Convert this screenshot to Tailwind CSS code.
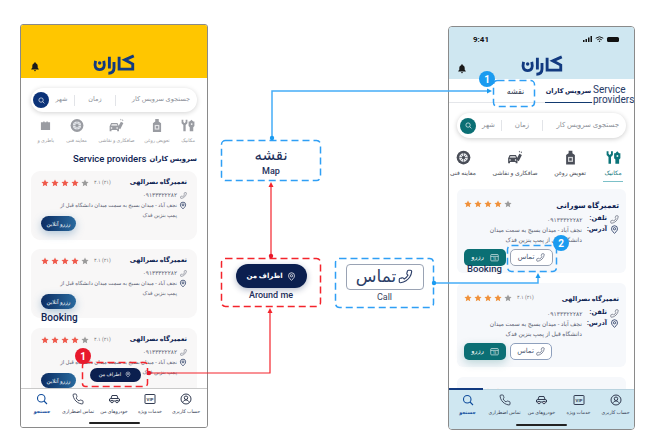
<!DOCTYPE html>
<html lang="fa">
<head>
<meta charset="utf-8">
<script src="https://cdn.jsdelivr.net/npm/@tailwindcss/browser@4"></script>
</head>
<body class="bg-white">
<svg class="hidden" width="0" height="0">
  <defs>
    <symbol id="phone" viewBox="0 0 24 24"><path fill="none" stroke="currentColor" stroke-width="1.8" d="M22 16.92v3a2 2 0 0 1-2.18 2 19.79 19.79 0 0 1-8.63-3.07 19.5 19.5 0 0 1-6-6 19.79 19.79 0 0 1-3.07-8.67A2 2 0 0 1 4.11 2h3a2 2 0 0 1 2 1.72 12.84 12.84 0 0 0 .7 2.81 2 2 0 0 1-.45 2.11L8.09 9.91a16 16 0 0 0 6 6l1.27-1.27a2 2 0 0 1 2.11-.45 12.84 12.84 0 0 0 2.81.7A2 2 0 0 1 22 16.92z"/></symbol>
    <symbol id="pin" viewBox="0 0 24 24"><path fill="none" stroke="currentColor" stroke-width="2" d="M20 10c0 6-8 12-8 12s-8-6-8-12a8 8 0 0 1 16 0Z"/><circle cx="12" cy="10" r="3" fill="none" stroke="currentColor" stroke-width="2"/></symbol>
    <symbol id="star" viewBox="0 0 24 24"><path fill="currentColor" d="M12 1.5l3.2 6.9 7.5.9-5.5 5.2 1.4 7.5-6.6-3.7-6.6 3.7 1.4-7.5-5.5-5.2 7.5-.9z"/></symbol>
    <symbol id="bell" viewBox="0 0 24 24"><path fill="currentColor" d="M12 2a2 2 0 0 1 2 2c3 1 4.500 3.500 4.500 7v4l2.500 3v1H3v-1l2.500-3v-4c0-3.500 1.500-6 4.500-7a2 2 0 0 1 2-2zM9.500 21h5a2.500 2.500 0 0 1-5 0z"/></symbol>
    <symbol id="search" viewBox="0 0 24 24"><circle cx="10.500" cy="10.500" r="7.500" fill="none" stroke="currentColor" stroke-width="2.200"/><path d="M16 16l6 6" stroke="currentColor" stroke-width="2.200"/></symbol>
    <symbol id="logo" viewBox="0 0 41 20"><g fill="none" stroke="currentColor" stroke-width="2.800"><path d="M39.800 1.600L31 5.500L38.800 9.600V14.500H25.500V2.500"/><path d="M20.500 7.500V13.500Q20.500 18.500 15 18.500"/><path d="M16 2.500V14"/><path d="M2.500 6.500Q0.500 15 6.500 15Q12.500 15 10.500 6.500"/></g><circle cx="6.500" cy="8.500" r="1.700" fill="currentColor"/></symbol>
    <symbol id="mech" viewBox="0 0 24 24"><path fill="currentColor" d="M1 2h3v4l2 2 2-2V2h3v6l-3 3v11H4V11L1 8zM15 5l3-3 3 3h2v8l-2 2v7h-6v-7l-2-2V5z"/><path fill="#fff" opacity=".8" d="M17 8h2.500v3H17z"/></symbol>
    <symbol id="oil" viewBox="0 0 24 24"><path fill="currentColor" d="M9 1h6v4l4 3v15H5V8l4-3z"/><rect x="8" y="11" width="8" height="8" fill="#fff" opacity=".75"/><rect x="10" y="13" width="4" height="4" fill="currentColor"/></symbol>
    <symbol id="paint" viewBox="0 0 24 24"><path fill="currentColor" d="M1 13l2.500-5h10l2.500 5v8h-3v-2H4v2H1z"/><path d="M4.500 9.500h8l1 3h-10z" fill="#fff" opacity=".7"/><circle cx="4" cy="16" r="1.300" fill="#fff"/><circle cx="13" cy="16" r="1.300" fill="#fff"/><path fill="currentColor" d="M14 15l5-9 4 2-5 10zM19 1l1 2-1 1-1-2zM22 2l1 2-1 1-1-2z"/></symbol>
    <symbol id="tire" viewBox="0 0 24 24"><circle cx="12" cy="12" r="11" fill="currentColor"/><circle cx="12" cy="12" r="7" fill="#e5e7eb"/><circle cx="12" cy="12" r="2.500" fill="currentColor"/><path d="M12 5v14M5 12h14M7 7l10 10M17 7L7 17" stroke="currentColor" stroke-width="1"/></symbol>
    <symbol id="batt" viewBox="0 0 24 24"><path fill="currentColor" d="M2 5h5V3h3v2h4V3h3v2h5v17H2z"/></symbol>
    <symbol id="car" viewBox="0 0 24 24"><path fill="none" stroke="currentColor" stroke-width="2" d="M2 16v-4l3-1 2-6h10l2 6 3 1v4z"/><path stroke="currentColor" stroke-width="2" d="M5 11h14"/><circle cx="7" cy="17" r="2.500" fill="#fff" stroke="currentColor" stroke-width="2"/><circle cx="17" cy="17" r="2.500" fill="#fff" stroke="currentColor" stroke-width="2"/></symbol>
    <symbol id="user" viewBox="0 0 24 24"><circle cx="12" cy="12" r="10" fill="none" stroke="currentColor" stroke-width="2"/><circle cx="12" cy="9.500" r="3.500" fill="none" stroke="currentColor" stroke-width="2"/><path d="M5.500 19c1-3.500 3.500-5 6.500-5s5.500 1.500 6.500 5" fill="none" stroke="currentColor" stroke-width="2"/></symbol>
    <symbol id="vip" viewBox="0 0 24 24"><rect x="2" y="3" width="20" height="18" rx="1" fill="none" stroke="currentColor" stroke-width="2"/><text x="12" y="15.500" text-anchor="middle" font-size="8.500" font-weight="700" font-family="Roboto" fill="currentColor">VIP</text></symbol>
    <symbol id="cal" viewBox="0 0 24 24"><rect x="2" y="4" width="20" height="17" rx="2" fill="none" stroke="currentColor" stroke-width="1.600"/><path d="M2 9h20" stroke="currentColor" stroke-width="1.600"/><text x="12" y="18" text-anchor="middle" font-size="7" font-family="Roboto" fill="currentColor">15</text></symbol>
  </defs>
</svg>

<main class="relative w-[669px] h-[446px] overflow-hidden bg-white text-[#0e2352] font-['Roboto','DejaVu_Sans',sans-serif]">

  <!-- left phone -->
  <section class="absolute left-[20px] top-[24px] w-[188px] h-[404px] flex flex-col overflow-hidden border border-[#8a8a8a] rounded-[3px] bg-white">
    <header class="relative h-[53px] shrink-0 bg-[#ffc600] flex items-end justify-center pb-[3px]">
      <svg class="w-[42px] h-[21px] text-[#123a80]"><use href="#logo"/></svg>
      <svg class="absolute left-[9px] top-[36px] w-[10px] h-[11px] text-[#1a1a1a]"><use href="#bell"/></svg>
    </header>
    <div class="flex-1 min-h-0 overflow-hidden px-[10px] pt-[10px]">
      <div dir="rtl" class="h-[24px] rounded-full bg-white shadow-[0_1px_5px_rgba(0,0,0,0.18)] flex items-center pr-[7px] pl-[2px] text-[6.500px] text-[#8b8f98]">
        <span class="w-[74px]">جستجوی سرویس کار</span>
        <span class="w-px h-[11px] bg-[#e2e4e8]"></span>
        <span class="w-[40px] text-center">زمان</span>
        <span class="w-px h-[11px] bg-[#e2e4e8]"></span>
        <span class="flex-1 text-center">شهر</span>
        <span class="w-[16px] h-[16px] rounded-full bg-[#0b3278] flex items-center justify-center text-white"><svg class="w-[7px] h-[7px]"><use href="#search"/></svg></span>
      </div>
      <div dir="rtl" class="mt-[6px] -mr-[6px] flex text-[#9a9ca2] text-[4.800px] text-center">
        <div class="w-[32px] flex flex-col items-center gap-[4px]"><svg class="w-[14px] h-[15px]"><use href="#mech"/></svg><span>مکانیک</span></div>
        <div class="w-[35px] flex flex-col items-center gap-[4px]"><svg class="w-[14px] h-[15px]"><use href="#oil"/></svg><span>تعویض روغن</span></div>
        <div class="w-[52px] flex flex-col items-center gap-[4px]"><svg class="w-[15px] h-[15px]"><use href="#paint"/></svg><span>صافکاری و نقاشی</span></div>
        <div class="w-[34px] flex flex-col items-center gap-[4px]"><svg class="w-[14px] h-[15px]"><use href="#tire"/></svg><span>معاینه فنی</span></div>
        <div class="w-[32px] flex flex-col items-center gap-[4px]"><svg class="w-[11px] h-[15px]"><use href="#batt"/></svg><span>باطری و</span></div>
      </div>
      <div dir="rtl" class="mt-[9px] flex items-center gap-[3px] h-[11px]">
        <span class="text-[6.800px] font-bold">سرویس کاران</span>
        <span dir="ltr" class="text-[9.500px] font-medium">Service providers</span>
      </div>

      <article dir="rtl" class="mt-[7px] h-[69px] rounded-[9px] bg-[#f8f7f7] pt-[6px] pr-[10px] pl-[10px] text-[5.800px] text-[#5a6072]">
        <div class="flex justify-between items-center h-[12px]">
          <b class="text-[6.500px] text-[#0e2352]">تعمیرگاه نصرالهی</b>
          <span dir="ltr" class="flex items-center gap-[2px]"><svg class="w-[8px] h-[8px] text-[#ef5a4c]"><use href="#star"/></svg><svg class="w-[8px] h-[8px] text-[#ef5a4c]"><use href="#star"/></svg><svg class="w-[8px] h-[8px] text-[#ef5a4c]"><use href="#star"/></svg><svg class="w-[8px] h-[8px] text-[#ef5a4c]"><use href="#star"/></svg><svg class="w-[8px] h-[8px] text-[#9b9b9b]"><use href="#star"/></svg><span class="ml-[3px] text-[5px] text-[#777]">۴.۱ (۲۱)</span></span>
        </div>
        <div class="mt-[1px] flex items-center gap-[3px] h-[11px]"><svg class="w-[7px] h-[7px] -scale-x-100"><use href="#phone"/></svg><span>۰۹۱۳۳۳۲۲۲۸۲</span></div>
        <div class="flex gap-[2px]"><svg class="w-[8px] h-[9px] shrink-0 text-[#0e2352]"><use href="#pin"/></svg><p class="leading-[9.500px] w-[128px] text-[5.400px]">نجف آباد - میدان بسیج به سمت میدان دانشگاه قبل از پمپ بنزین فدک</p></div>
        <div class="-mt-[4px] flex justify-end"><span class="w-[35px] h-[15px] rounded-full bg-gradient-to-r from-[#0d2d63] to-[#2a6a9e] text-white text-[5.500px] flex items-center justify-center shadow-[0_3px_8px_rgba(42,106,158,0.35)]">رزرو آنلاین</span></div>
      </article>

      <article dir="rtl" class="mt-[9px] h-[69px] rounded-[9px] bg-[#f8f7f7] pt-[6px] pr-[10px] pl-[10px] text-[5.800px] text-[#5a6072]">
        <div class="flex justify-between items-center h-[12px]">
          <b class="text-[6.500px] text-[#0e2352]">تعمیرگاه نصرالهی</b>
          <span dir="ltr" class="flex items-center gap-[2px]"><svg class="w-[8px] h-[8px] text-[#ef5a4c]"><use href="#star"/></svg><svg class="w-[8px] h-[8px] text-[#ef5a4c]"><use href="#star"/></svg><svg class="w-[8px] h-[8px] text-[#ef5a4c]"><use href="#star"/></svg><svg class="w-[8px] h-[8px] text-[#ef5a4c]"><use href="#star"/></svg><svg class="w-[8px] h-[8px] text-[#9b9b9b]"><use href="#star"/></svg><span class="ml-[3px] text-[5px] text-[#777]">۴.۱ (۲۱)</span></span>
        </div>
        <div class="mt-[1px] flex items-center gap-[3px] h-[11px]"><svg class="w-[7px] h-[7px] -scale-x-100"><use href="#phone"/></svg><span>۰۹۱۳۳۳۲۲۲۸۲</span></div>
        <div class="flex gap-[2px]"><svg class="w-[8px] h-[9px] shrink-0 text-[#0e2352]"><use href="#pin"/></svg><p class="leading-[9.500px] w-[128px] text-[5.400px]">نجف آباد - میدان بسیج به سمت میدان دانشگاه قبل از پمپ بنزین فدک</p></div>
        <div class="-mt-[4px] flex justify-end"><span class="w-[35px] h-[15px] rounded-full bg-gradient-to-r from-[#0d2d63] to-[#2a6a9e] text-white text-[5.500px] flex items-center justify-center shadow-[0_3px_8px_rgba(42,106,158,0.35)]">رزرو آنلاین</span></div>
      </article>

      <div class="h-[10px] pl-[10px] text-[10px] leading-[10px] font-medium -translate-y-[5px]">Booking</div>

      <article dir="rtl" class="h-[69px] rounded-[9px] bg-[#f8f7f7] pt-[6px] pr-[10px] pl-[10px] text-[5.800px] text-[#5a6072]">
        <div class="flex justify-between items-center h-[12px]">
          <b class="text-[6.500px] text-[#0e2352]">تعمیرگاه نصرالهی</b>
          <span dir="ltr" class="flex items-center gap-[2px]"><svg class="w-[8px] h-[8px] text-[#ef5a4c]"><use href="#star"/></svg><svg class="w-[8px] h-[8px] text-[#ef5a4c]"><use href="#star"/></svg><svg class="w-[8px] h-[8px] text-[#ef5a4c]"><use href="#star"/></svg><svg class="w-[8px] h-[8px] text-[#ef5a4c]"><use href="#star"/></svg><svg class="w-[8px] h-[8px] text-[#9b9b9b]"><use href="#star"/></svg><span class="ml-[3px] text-[5px] text-[#777]">۴.۱ (۲۱)</span></span>
        </div>
        <div class="mt-[1px] flex items-center gap-[3px] h-[11px]"><svg class="w-[7px] h-[7px] -scale-x-100"><use href="#phone"/></svg><span>۰۹۱۳۳۳۲۲۲۸۲</span></div>
        <div class="flex gap-[2px]"><svg class="w-[8px] h-[9px] shrink-0 text-[#0e2352]"><use href="#pin"/></svg><p class="leading-[9.500px] w-[128px] text-[5.400px]">نجف آباد - میدان بسیج به سمت میدان دانشگاه قبل از پمپ بنزین فدک</p></div>
        <div class="-mt-[4px] flex justify-end"><span class="w-[35px] h-[15px] rounded-full bg-gradient-to-r from-[#0d2d63] to-[#2a6a9e] text-white text-[5.500px] flex items-center justify-center">رزرو آنلاین</span></div>
      </article>
    </div>
    <nav dir="rtl" class="relative h-[39px] shrink-0 bg-white border-t border-[#c9c9c9] flex px-[3px] pt-[4px] text-[4.800px] text-[#333c52] text-center">
      <div class="flex-1 flex flex-col items-center gap-[3px]"><svg class="w-[12px] h-[12px]"><use href="#user"/></svg><span>حساب کاربری</span></div>
      <div class="flex-1 flex flex-col items-center gap-[3px]"><svg class="w-[12px] h-[12px]"><use href="#vip"/></svg><span>خدمات ویژه</span></div>
      <div class="flex-1 flex flex-col items-center gap-[3px]"><svg class="w-[13px] h-[12px]"><use href="#car"/></svg><span>خودروهای من</span></div>
      <div class="flex-1 flex flex-col items-center gap-[3px]"><svg class="w-[12px] h-[12px]"><use href="#phone"/></svg><span>تماس اضطراری</span></div>
      <div class="flex-1 flex flex-col items-center gap-[3px] text-[#0f4c9c]"><svg class="w-[12px] h-[12px]"><use href="#search"/></svg><b>جستجو</b></div>
      <span class="absolute bottom-[3px] left-[68px] w-[51px] h-[2px] rounded-full bg-[#222]"></span>
    </nav>
  </section>

  <!-- right phone -->
  <section class="absolute left-[448px] top-[26px] w-[187px] h-[404px] flex flex-col overflow-hidden border border-[#8a8a8a] rounded-[4px] bg-white">
    <header class="relative h-[52px] shrink-0 bg-[#cfe7f1] flex items-end justify-center pb-[3px]">
      <b class="absolute left-[24px] top-[7px] text-[8px] text-[#111]">9:41</b>
      <div class="absolute right-[15px] top-[9px] flex items-center gap-[3px] text-[#111]">
        <svg class="w-[9px] h-[6px]" viewBox="0 0 9 6"><path fill="currentColor" d="M0 4h1.500v2H0zM2.500 3H4v3H2.500zM5 1.500h1.500V6H5zM7.500 0H9v6H7.500z"/></svg>
        <svg class="w-[9px] h-[6px]" viewBox="0 0 12 8"><path fill="none" stroke="currentColor" stroke-width="1.300" d="M1 3q5-4 10 0M3 5q3-2.500 6 0"/><circle cx="6" cy="7" r="1" fill="currentColor"/></svg>
        <span class="w-[12px] h-[5px] rounded-[1.500px] bg-[#111]"></span>
      </div>
      <svg class="w-[42px] h-[21px] text-[#123a80]"><use href="#logo"/></svg>
      <svg class="absolute left-[8px] top-[36px] w-[10px] h-[11px] text-[#1a1a1a]"><use href="#bell"/></svg>
    </header>
    <div dir="rtl" class="h-[24px] shrink-0 border-b border-[#e4e6ea] flex items-start text-[#0e2352]">
      <span dir="ltr" class="w-[41px] shrink-0 text-[10px] leading-[10px] text-[#263a66] pt-[6px] text-left whitespace-nowrap">Service<br>providers</span>
      <div class="w-[47px] shrink-0 h-[24px] border-b-[1.500px] border-[#123a70] text-[6.500px] font-bold text-center pt-[8px] mr-[1px] whitespace-nowrap">سرویس کاران</div>
      <div class="w-[59px] shrink-0 text-[8px] text-center pt-[7px] text-[#333c52]">نقشه</div>
    </div>
    <div class="flex-1 min-h-0 overflow-hidden px-[8px] pt-[10px]">
      <div dir="rtl" class="h-[25px] rounded-full bg-white shadow-[0_1px_5px_rgba(0,0,0,0.2)] flex items-center pr-[7px] pl-[3px] text-[7px] text-[#8b8f98]">
        <span class="w-[76px]">جستجوی سرویس کار</span>
        <span class="w-px h-[11px] bg-[#e2e4e8]"></span>
        <span class="w-[40px] text-center">زمان</span>
        <span class="w-px h-[11px] bg-[#e2e4e8]"></span>
        <span class="flex-1 text-center">شهر</span>
        <span class="w-[16px] h-[16px] rounded-full bg-[#0b6f74] flex items-center justify-center text-white"><svg class="w-[7px] h-[7px]"><use href="#search"/></svg></span>
      </div>
    </div>
    <div class="absolute left-0 right-0 top-[123px] overflow-hidden">
      <div dir="rtl" class="flex text-[#4a4e58] text-[6px] text-center pr-[2px] h-[32px]">
        <div class="relative w-[38px] shrink-0 flex flex-col items-center gap-[3px] text-[#0b7479]"><svg class="w-[15px] h-[15px]"><use href="#mech"/></svg><span>مکانیک</span><span class="absolute bottom-0 w-[20px] h-px bg-[#7cc0c8]"></span></div>
        <div class="w-[48px] shrink-0 flex flex-col items-center gap-[3px]"><svg class="w-[15px] h-[15px]"><use href="#oil"/></svg><span>تعویض روغن</span></div>
        <div class="w-[62px] shrink-0 flex flex-col items-center gap-[3px]"><svg class="w-[16px] h-[15px]"><use href="#paint"/></svg><span>صافکاری و نقاشی</span></div>
        <div class="w-[42px] shrink-0 flex flex-col items-center gap-[3px]"><svg class="w-[15px] h-[15px]"><use href="#tire"/></svg><span class="whitespace-nowrap">معاینه فنی</span></div>
      </div>
    </div>
    <div class="absolute left-[8px] top-[162px] w-[169px] flex flex-col gap-[10px] text-[6px] text-[#5a6072]">
      <article dir="rtl" class="relative h-[84px] rounded-[6px] bg-[#f6f8fb] pt-[11px] px-[7px]">
        <div class="flex justify-between items-center h-[12px]">
          <b class="text-[7.500px] text-[#0e2352]">تعمیرگاه سورانی</b>
          <span dir="ltr" class="flex items-center gap-[2px] -mt-[5px]"><svg class="w-[8px] h-[8px] text-[#f0913a]"><use href="#star"/></svg><svg class="w-[8px] h-[8px] text-[#f0913a]"><use href="#star"/></svg><svg class="w-[8px] h-[8px] text-[#f0913a]"><use href="#star"/></svg><svg class="w-[8px] h-[8px] text-[#f0913a]"><use href="#star"/></svg><svg class="w-[8px] h-[8px] text-[#9b9b9b]"><use href="#star"/></svg></span>
        </div>
        <div class="mt-[1px] flex items-center gap-[3px] h-[12px]"><svg class="w-[9px] h-[9px] -scale-x-100"><use href="#phone"/></svg><b class="text-[6.500px] text-[#0e2352]">تلفن:</b><span class="mr-[4px]">۰۹۱۳۳۳۲۲۲۸۲</span></div>
        <div class="flex gap-[3px]"><svg class="w-[9px] h-[9px] shrink-0 text-[#0e2352]"><use href="#pin"/></svg><b class="text-[6.500px] text-[#0e2352] shrink-0">آدرس:</b><p class="leading-[9.500px] w-[108px] mr-[2px]">نجف آباد - میدان بسیج به سمت میدان دانشگاه قبل از پمپ بنزین فدک</p></div>
        <div class="absolute left-[7px] top-[60px] flex gap-[4px]" dir="ltr">
          <span dir="rtl" class="w-[42px] h-[17px] rounded-[5px] bg-[#0b6f74] text-white text-[6.500px] flex items-center justify-center gap-[6px]"><svg class="w-[9px] h-[9px]"><use href="#cal"/></svg>رزرو</span>
          <span dir="rtl" class="w-[43px] h-[17px] rounded-[5px] bg-white border border-[#9aa3b4] text-[#4a5672] text-[7px] flex items-center justify-center gap-[2px]"><svg class="w-[9px] h-[9px] -scale-x-100"><use href="#phone"/></svg>تماس</span>
        </div>
        <span dir="ltr" class="absolute left-[10px] top-[75px] text-[9.500px] leading-[10px] text-[#1d3158] font-medium">Booking</span>
      </article>
      <article dir="rtl" class="relative h-[84px] rounded-[6px] bg-[#f6f8fb] pt-[11px] px-[7px]">
        <div class="flex justify-between items-center h-[12px]">
          <b class="text-[6.500px] text-[#0e2352]">تعمیرگاه نصرالهی</b>
          <span dir="ltr" class="flex items-center gap-[2px] -mt-[5px]"><svg class="w-[8px] h-[8px] text-[#f0913a]"><use href="#star"/></svg><svg class="w-[8px] h-[8px] text-[#f0913a]"><use href="#star"/></svg><svg class="w-[8px] h-[8px] text-[#f0913a]"><use href="#star"/></svg><svg class="w-[8px] h-[8px] text-[#f0913a]"><use href="#star"/></svg><svg class="w-[8px] h-[8px] text-[#9b9b9b]"><use href="#star"/></svg><span class="ml-[3px] text-[5px] text-[#777]">۴.۱ (۲۱)</span></span>
        </div>
        <div class="mt-[1px] flex items-center gap-[3px] h-[12px]"><svg class="w-[9px] h-[9px] -scale-x-100"><use href="#phone"/></svg><b class="text-[6.500px] text-[#0e2352]">تلفن:</b><span class="mr-[4px]">۰۹۱۳۳۳۲۲۲۸۲</span></div>
        <div class="flex gap-[3px]"><svg class="w-[9px] h-[9px] shrink-0 text-[#0e2352]"><use href="#pin"/></svg><b class="text-[6.500px] text-[#0e2352] shrink-0">آدرس:</b><p class="leading-[9.500px] w-[108px] mr-[2px]">نجف آباد - میدان بسیج به سمت میدان دانشگاه قبل از پمپ بنزین فدک</p></div>
        <div class="absolute left-[7px] top-[60px] flex gap-[4px]" dir="ltr">
          <span dir="rtl" class="w-[42px] h-[17px] rounded-[5px] bg-[#0b6f74] text-white text-[6.500px] flex items-center justify-center gap-[6px] shadow-[0_3px_8px_rgba(11,111,116,0.25)]"><svg class="w-[9px] h-[9px]"><use href="#cal"/></svg>رزرو</span>
          <span dir="rtl" class="w-[42px] h-[17px] rounded-[5px] bg-white border border-[#8ea0bd] text-[#4a5672] text-[7px] flex items-center justify-center gap-[2px]"><svg class="w-[9px] h-[9px] -scale-x-100"><use href="#phone"/></svg>تماس</span>
        </div>
      </article>
      <article dir="rtl" class="relative h-[84px] rounded-[6px] bg-[#f6f8fb] pt-[11px] px-[7px]">
        <div class="flex justify-between items-center h-[12px]">
          <b class="text-[6.500px] text-[#0e2352]">تعمیرگاه نصرالهی</b>
          <span dir="ltr" class="flex items-center gap-[2px] -mt-[5px]"><svg class="w-[8px] h-[8px] text-[#f0913a]"><use href="#star"/></svg><svg class="w-[8px] h-[8px] text-[#f0913a]"><use href="#star"/></svg><svg class="w-[8px] h-[8px] text-[#f0913a]"><use href="#star"/></svg><svg class="w-[8px] h-[8px] text-[#f0913a]"><use href="#star"/></svg></span>
        </div>
      </article>
    </div>
    <nav dir="rtl" class="absolute left-0 right-0 bottom-0 h-[40px] bg-[#cfe7f1] border-t border-[#b9d3df] flex pt-[4px] text-[4.800px] text-[#333c52] text-center">
      <span class="absolute -top-[2px] left-0 w-[34px] h-[2px] bg-[#123a80]"></span>
      <div class="flex-1 flex flex-col items-center gap-[3px]"><svg class="w-[12px] h-[12px]"><use href="#user"/></svg><span>حساب کاربری</span></div>
      <div class="flex-1 flex flex-col items-center gap-[3px]"><svg class="w-[12px] h-[12px]"><use href="#vip"/></svg><span>خدمات ویژه</span></div>
      <div class="flex-1 flex flex-col items-center gap-[3px]"><svg class="w-[13px] h-[12px]"><use href="#car"/></svg><span>خودروهای من</span></div>
      <div class="flex-1 flex flex-col items-center gap-[3px]"><svg class="w-[12px] h-[12px]"><use href="#phone"/></svg><span>تماس اضطراری</span></div>
      <div class="flex-1 flex flex-col items-center gap-[3px] text-[#0f4c9c]"><svg class="w-[12px] h-[12px]"><use href="#search"/></svg><b>جستجو</b></div>
      <span class="absolute bottom-[3px] left-[67px] w-[51px] h-[2px] rounded-full bg-[#222]"></span>
    </nav>
  </section>

  <!-- diagram labels -->
  <div class="absolute left-[221px] top-[140px] w-[100px] h-[41px] flex flex-col items-center justify-center text-[#1d2f5a]">
    <span class="text-[15px] leading-[20px]">نقشه</span>
    <span class="text-[9px] leading-[12px] font-medium">Map</span>
  </div>
  <div class="absolute left-[221px] top-[258px] w-[100px] h-[49px] flex flex-col items-center justify-center gap-[2px] text-[#1d2f5a]">
    <span dir="rtl" class="w-[71px] h-[24px] rounded-full bg-[#0b1f4f] text-white text-[7px] font-bold flex items-center justify-center gap-[4px] shadow-[0_2px_6px_rgba(11,31,79,0.3)]"><svg class="w-[9px] h-[11px]"><use href="#pin"/></svg>اطراف من</span>
    <span class="text-[9px] leading-[11px] font-medium">Around me</span>
  </div>
  <div class="absolute left-[335px] top-[258px] w-[99px] h-[50px] flex flex-col items-center justify-center gap-[2px] text-[#3b4660]">
    <span dir="rtl" class="w-[78px] h-[26px] rounded-[4px] bg-white border border-[#9aa3b4] text-[#2c3e68] text-[17px] flex items-center justify-center gap-[2px]"><svg class="w-[15px] h-[15px] -scale-x-100"><use href="#phone"/></svg>تماس</span>
    <span class="text-[9px] leading-[11px]">Call</span>
  </div>

  <!-- left callout -->
  <div class="absolute left-[82px] top-[362px] w-[66px] h-[25px] flex items-center justify-center">
    <span dir="rtl" class="w-[51px] h-[14px] rounded-full bg-[#0b1f4f] text-white text-[5px] flex items-center justify-center gap-[4px]"><svg class="w-[6px] h-[7px]"><use href="#pin"/></svg>اطراف من</span>
  </div>

  <!-- connectors and dashed frames -->
  <svg class="absolute left-0 top-0 w-[669px] h-[446px] pointer-events-none" viewBox="0 0 669 446" fill="none">
    <g stroke-width="1.500" stroke-dasharray="7 4">
      <rect x="221.500" y="140.500" width="99" height="40" rx="4" stroke="#2f9ff5"/>
      <rect x="221.500" y="258.500" width="99" height="48" rx="4" stroke="#f4242c"/>
      <rect x="335.500" y="258.500" width="98" height="49" rx="4" stroke="#2f9ff5"/>
      <rect x="82.500" y="362.500" width="65" height="24" rx="3" stroke="#f4242c"/>
      <rect x="493.500" y="80.500" width="41" height="26" rx="4" stroke="#2f9ff5"/>
      <rect x="507.500" y="245.500" width="49" height="26" rx="4" stroke="#2f9ff5"/>
    </g>
    <path d="M272 138V91H489" stroke="#45adf8" stroke-width="1.500"/>
    <circle cx="272" cy="138" r="2.200" fill="#1a9bf0"/>
    <path d="M492 91l-5-2.500v5z" fill="#1a9bf0"/>
    <path d="M434 283H538V277" stroke="#45adf8" stroke-width="1.500"/>
    <circle cx="434" cy="283" r="2.200" fill="#1a9bf0"/>
    <path d="M538 273l-2.500 5h5z" fill="#1a9bf0"/>
    <path d="M271 186V256" stroke="#f4242c" stroke-width="1.200"/>
    <path d="M271 182l-2.500 5h5z" fill="#f4242c"/>
    <circle cx="271" cy="256" r="2.200" fill="#e8192c"/>
    <path d="M270 312V373H149" stroke="#f4242c" stroke-width="1.200"/>
    <path d="M270 308l-2.500 5h5z" fill="#f4242c"/>
    <circle cx="149" cy="373" r="2.200" fill="#e8192c"/>
  </svg>

  <span class="absolute left-[75px] top-[348px] w-[16px] h-[16px] rounded-full bg-[#e8192c] text-white text-[10px] font-bold flex items-center justify-center">1</span>
  <span class="absolute left-[479px] top-[71px] w-[16px] h-[16px] rounded-full bg-[#1a9bf0] text-white text-[10px] font-bold flex items-center justify-center">1</span>
  <span class="absolute left-[553px] top-[235px] w-[16px] h-[16px] rounded-full bg-[#1a9bf0] text-white text-[10px] font-bold flex items-center justify-center">2</span>
</main>
</body>
</html>
